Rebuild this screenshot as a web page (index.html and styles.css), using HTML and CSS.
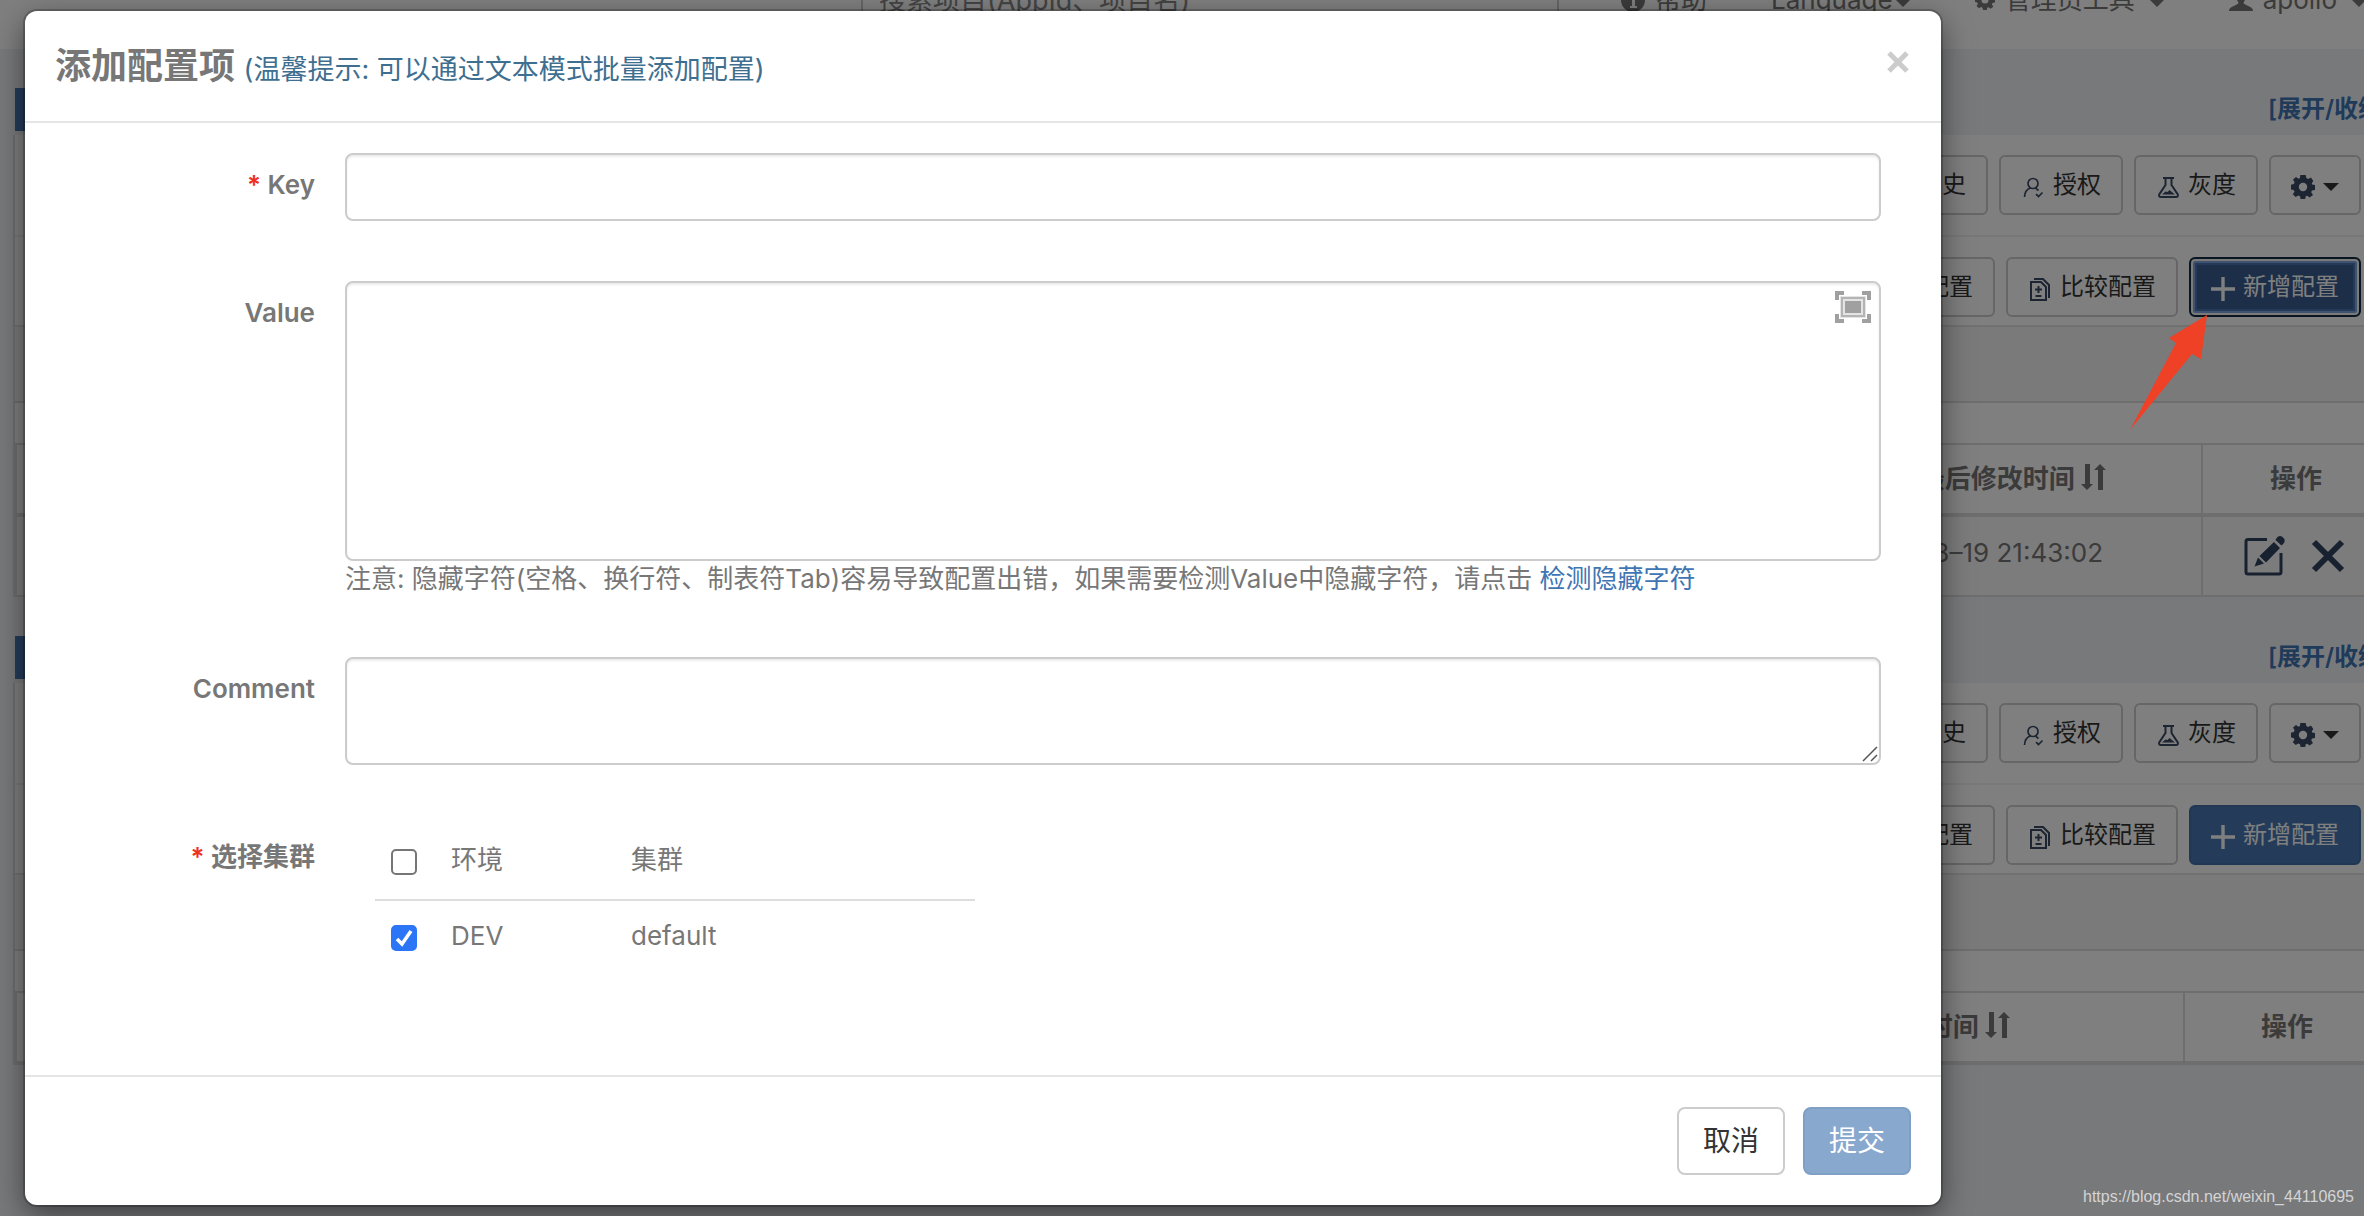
FILE: index.html
```html
<!DOCTYPE html>
<html lang="zh-CN">
<head>
<meta charset="utf-8">
<title>添加配置项</title>
<link rel="stylesheet" href="styles.css">
</head>
<body>
<svg class="sprite" aria-hidden="true">
  <symbol id="i-gear" viewBox="0 0 24 24"><path fill="currentColor" fill-rule="evenodd" d="M9.3 0h5.4l.6 3 1.9.9L20 2.4 22.300 6l-1.500 2.200.3 1.300L24 10v5l-3 .6-.8 1.600L22 20l-3.300 2.500-2.500-1.800-1.500.6L14.200 24H9.600L9 21.200l-1.700-.7L4.700 22 1.800 19.200l1.700-2.500-.8-1.600L0 14.500V9.700L2.800 9l.8-1.800L2 4.600 5 1.900l2.400 1.800L9 3zM12 7.800a4.200 4.200 0 1 0 0 8.400 4.200 4.200 0 0 0 0-8.400z"/></symbol>
  <symbol id="i-caret" viewBox="0 0 16 8"><path fill="currentColor" d="M0 0h16L8 8z"/></symbol>
  <symbol id="i-user" viewBox="0 0 26 26"><path fill="currentColor" d="M13 1c4 0 6 3 6 6.500S17 14 16 15v2l7 3.500c2 1 3 2.500 3 4.500H0c0-2 1-3.500 3-4.500L10 17v-2C9 14 7 11 7 7.500S9 1 13 1z"/></symbol>
  <symbol id="i-info" viewBox="0 0 24 24"><circle cx="12" cy="12" r="12" fill="currentColor"/><path fill="#fff" d="M9 10h5v8h2v2H9v-2h2v-6H9zM10 4h4v4h-4z"/></symbol>
  <symbol id="i-auth" viewBox="0 0 24 24"><g fill="none" stroke="currentColor" stroke-width="1.700"><circle cx="12" cy="8.500" r="5"/><path d="M3.500 22c.3-5 2.500-8 6-9M14.500 13.200l3 2.300M15 19.200l2.500 2.300 4-4"/></g></symbol>
  <symbol id="i-flask" viewBox="0 0 24 24"><path fill="none" stroke="currentColor" stroke-width="2" d="M7 3h11M9.500 3v7L3.200 19.500Q2.500 22 5 22h15q2.500 0 1.800-2.500L15.500 10V3"/><path fill="currentColor" d="M6 19.500l3.500-3 2 .5 2-2 5.500 4.500z"/></symbol>
  <symbol id="i-doc" viewBox="0 0 24 24"><g fill="none" stroke="currentColor" stroke-width="2"><path d="M3 5h10l5 5v13H3z"/><path d="M6 2h9l6 6v13M7 12.500h7M10.500 9v7M7.500 19h6"/></g></symbol>
  <symbol id="i-plus" viewBox="0 0 24 24"><path fill="currentColor" d="M10.300 0h3.400v10.300H24v3.400H13.700V24h-3.400V13.700H0v-3.400h10.300z"/></symbol>
  <symbol id="i-sort" viewBox="0 0 26 28"><path fill="currentColor" d="M4 1h5v20h3l-6 6-6-6h4zM17 27h5V7h3l-6-6-6 6h4z"/></symbol>
  <symbol id="i-edit" viewBox="0 0 42 42"><path fill="none" stroke="currentColor" stroke-width="3" d="M24 4.500H5q-2 0-2 2V37q0 2 2 2h31q2 0 2-2V18"/><path fill="currentColor" d="M31 7l6 6-14 14.500-6.500-6.500zM15 22.500l6 6-9.500 3zM33 4q2-4 6-2.500 4 3 2 6.500l-2.500 2.500L32.500 5z"/></symbol>
  <symbol id="i-cross" viewBox="0 0 34 34"><path fill="none" stroke="currentColor" stroke-width="6" d="M3 3l28 28M31 3L3 31"/></symbol>
</svg>

<div class="page">
  <nav class="navbar">
    <input class="search" type="text" aria-label="搜索项目" placeholder="搜索项目(AppId、项目名)">
    <ul class="menu">
      <li><a href="#"><svg class="ic24"><use href="#i-info"/></svg>帮助</a></li>
      <li><a href="#">Language<svg class="caret"><use href="#i-caret"/></svg></a></li>
      <li><a href="#"><svg class="ic20"><use href="#i-gear"/></svg>管理员工具<svg class="caret wide"><use href="#i-caret"/></svg></a></li>
      <li><a href="#"><svg class="ic24"><use href="#i-user"/></svg>apollo<svg class="caret wide"><use href="#i-caret"/></svg></a></li>
    </ul>
  </nav>

  <section class="namespace">
    <header class="ns-head"><span class="ns-tag">私有</span><a href="#">[展开/收缩]</a></header>
    <div class="panel">
      <div class="toolbar">
        <button class="btn"><svg class="ic24"><use href="#i-doc"/></svg>更改历史</button>
        <button class="btn"><svg class="ic24"><use href="#i-auth"/></svg>授权</button>
        <button class="btn"><svg class="ic24"><use href="#i-flask"/></svg>灰度</button>
        <button class="btn" aria-label="设置"><svg class="ic24"><use href="#i-gear"/></svg><svg class="caret"><use href="#i-caret"/></svg></button>
      </div>
      <div class="toolbar second">
        <button class="btn"><svg class="ic24"><use href="#i-doc"/></svg>同步配置</button>
        <button class="btn"><svg class="ic24"><use href="#i-doc"/></svg>比较配置</button>
        <button class="btn primary focused"><svg class="ic24"><use href="#i-plus"/></svg>新增配置</button>
      </div>
      <div class="filter"></div>
      <table class="items">
        <thead><tr><th class="time">最后修改时间 <svg class="sort"><use href="#i-sort"/></svg></th><th class="ops">操作</th></tr></thead>
        <tbody><tr><td class="time">2020–08–19 21:43:02</td><td class="ops"><div class="actions"><svg class="ic42"><use href="#i-edit"/></svg><svg class="ic34"><use href="#i-cross"/></svg></div></td></tr></tbody>
      </table>
    </div>
  </section>

  <section class="namespace">
    <header class="ns-head"><span class="ns-tag">私有</span><a href="#">[展开/收缩]</a></header>
    <div class="panel">
      <div class="toolbar">
        <button class="btn"><svg class="ic24"><use href="#i-doc"/></svg>更改历史</button>
        <button class="btn"><svg class="ic24"><use href="#i-auth"/></svg>授权</button>
        <button class="btn"><svg class="ic24"><use href="#i-flask"/></svg>灰度</button>
        <button class="btn" aria-label="设置"><svg class="ic24"><use href="#i-gear"/></svg><svg class="caret"><use href="#i-caret"/></svg></button>
      </div>
      <div class="toolbar second">
        <button class="btn"><svg class="ic24"><use href="#i-doc"/></svg>同步配置</button>
        <button class="btn"><svg class="ic24"><use href="#i-doc"/></svg>比较配置</button>
        <button class="btn primary"><svg class="ic24"><use href="#i-plus"/></svg>新增配置</button>
      </div>
      <div class="filter"></div>
      <table class="items empty">
        <thead><tr><th class="time">最后修改时间 <svg class="sort"><use href="#i-sort"/></svg></th><th class="ops">操作</th></tr></thead>
      </table>
    </div>
  </section>
</div>

<div class="overlay">
  <form class="modal" role="dialog" aria-labelledby="dlg-title">
    <header class="modal-head">
      <h4 id="dlg-title">添加配置项 <small>(温馨提示: 可以通过文本模式批量添加配置)</small></h4>
      <button class="close" type="button" aria-label="关闭"><svg viewBox="0 0 22 22"><path fill="none" stroke="#ccc" stroke-width="5" d="M2 2l18 18M20 2L2 20"/></svg></button>
    </header>
    <div class="modal-body">
      <label class="name" for="key"><span class="req">*</span> Key</label>
      <input class="field" id="key" type="text">

      <label class="name" for="value">Value</label>
      <div class="box">
        <textarea class="field tall" id="value"></textarea>
        <svg class="expand" viewBox="0 0 36 32"><path fill="#a0a0a0" d="M0 0h9v4H4v5H0zM27 0h9v9h-4V4h-5zM0 23h4v5h5v4H0zM32 23h4v9h-9v-4h5z"/><path fill="#e4e4e4" d="M5 5h26v22H5z"/><path fill="none" stroke="#b4b4b4" stroke-width="2" d="M7 7h22v18H7z"/><path fill="#a0a0a0" d="M10 10h16v12H10z"/></svg>
        <p class="help">注意: 隐藏字符(空格、换行符、制表符Tab)容易导致配置出错，如果需要检测Value中隐藏字符，请点击 <a href="#">检测隐藏字符</a></p>
      </div>

      <label class="name" for="comment">Comment</label>
      <div class="box">
        <textarea class="field short" id="comment"></textarea>
        <svg class="grip" viewBox="0 0 16 16"><path fill="none" stroke="#555" stroke-width="1.500" d="M1 15L15 1M9 15l6-6"/></svg>
      </div>

      <div class="name"><span class="req">*</span> 选择集群</div>
      <table class="clusters">
        <thead><tr><td class="pick"><input type="checkbox" aria-label="全选"></td><td class="env">环境</td><td>集群</td></tr></thead>
        <tbody><tr><td class="pick"><input type="checkbox" id="dev" checked></td><td class="env"><label for="dev">DEV</label></td><td>default</td></tr></tbody>
      </table>
    </div>
    <footer class="modal-foot">
      <button class="big" type="button">取消</button>
      <button class="big submit" type="submit">提交</button>
    </footer>
  </form>
</div>
<svg class="arrow" viewBox="0 0 78 116" aria-hidden="true"><path fill="#ee4126" d="M77 0L71 44 62 39 0 115 46 28 39 23z"/></svg>
<div class="watermark">https://blog.csdn.net/weixin_44110695</div>
</body>
</html>
```

FILE: styles.css
```css
* { box-sizing: border-box; }

body {
  margin: 0;
  height: 100vh;
  position: relative;
  overflow: hidden;
  background: #f1f2f7;
  color: #777;
  font: 26px/36px Inter, "Noto Sans CJK SC", sans-serif;
}

a { color: #4075b4; text-decoration: none; }
svg { display: block; flex: none; }
button, input, textarea { font: inherit; }
.sprite { position: absolute; width: 0; height: 0; }

.ic20 { width: 20px; height: 20px; }
.ic24 { width: 24px; height: 24px; }
.ic34 { width: 34px; height: 34px; }
.ic42 { width: 42px; height: 42px; }
.caret { width: 16px; height: 8px; }

/* page behind the dialog; it runs on past the right edge */
.page { margin-right: -27px; }

.navbar {
  display: flex;
  align-items: center;
  justify-content: flex-end;
  gap: 62px;
  height: 98px;
  margin-top: -49px;
  padding-right: 24px;
  background: #fff;
}
.search {
  flex: 0 1 698px;
  height: 68px;
  padding: 0 16px;
  border: 2px solid #ccc;
  background: #fff;
  font-size: 27px;
}
.search::placeholder { color: #888; }
.menu {
  display: flex;
  gap: 64px;
  margin: 0;
  padding: 0;
  list-style: none;
}
.menu a {
  display: flex;
  align-items: center;
  gap: 10px;
  color: #777;
  white-space: nowrap;
}
.menu .caret { margin: 6px 0 0 -8px; }
.menu .caret.wide { margin-left: 4px; }

.namespace { padding-left: 13px; }
.ns-head {
  display: flex;
  justify-content: space-between;
  align-items: flex-end;
  height: 86px;
  padding: 0 0 4px 2px;
  font-size: 24px;
}
.ns-head a { padding-bottom: 4px; font-weight: 600; }
.ns-tag {
  height: 43px;
  padding: 3px 16px;
  background: #4879b4;
  color: #fff;
}

.panel {
  border: 2px solid #ddd;
  border-width: 0 2px;
  background: #fff;
}
.toolbar {
  display: flex;
  justify-content: flex-end;
  gap: 11px;
  padding: 20px 28px 20px 0;
  border-bottom: 2px solid #f0f0f0;
}
.toolbar.second {
  padding-bottom: 8px;
  border-bottom-color: #e2e2e2;
}
.btn {
  display: flex;
  align-items: center;
  gap: 8px;
  height: 60px;
  padding: 0 20px;
  border: 2px solid #ccc;
  border-radius: 6px;
  background: #fff;
  color: #333;
  font-size: 24px;
  white-space: nowrap;
}
.btn svg { margin-top: 4px; color: #3a4a66; }
.btn .caret { color: #333; }
.btn.primary {
  border-color: #4171a8;
  background: #4879b4;
  color: #fff;
}
.btn.primary .ic24 { color: #fff; }
.btn.focused {
  border-color: #122b40;
  background: #385c90;
  box-shadow: inset 0 0 0 2px #f4f4f4, inset 0 0 0 4px #7ea6e0, inset 0 0 0 6px #4a74b0;
}
.filter {
  height: 76px;
  border-bottom: 2px solid #ddd;
  background: #f5f5f5;
}
.items {
  width: 100%;
  margin-top: 40px;
  border: 2px solid #ddd;
  border-right: 0;
  border-spacing: 0;
}
.items th, .items td { padding: 0; }
.items th { height: 70px; border-bottom: 2px solid #ddd; }
.items tbody td {
  height: 80px;
  border-top: 2px solid #ddd;
  background: #f9f9f9;
}
.items .time { padding-right: 94px; text-align: right; }
.items tbody .time { padding: 0 98px 6px 0; }
.items .ops { width: 188px; border-left: 2px solid #ddd; text-align: center; }
.items.empty .time { padding-right: 172px; }
.items.empty .ops { width: 206px; }
.sort {
  display: inline-block;
  width: 26px;
  height: 28px;
  vertical-align: -3px;
}
.actions {
  display: flex;
  align-items: center;
  justify-content: center;
  gap: 26px;
  padding-right: 4px;
  color: #30425e;
}

/* dialog */
.overlay {
  position: absolute;
  inset: 0;
  padding: 11px 423px 11px 25px;
  background: rgba(0, 0, 0, .5);
}
.modal {
  border-radius: 12px;
  background: #fff;
  box-shadow: 0 0 0 2px rgba(0, 0, 0, .2), 0 10px 30px rgba(0, 0, 0, .5);
}
.modal-head {
  display: flex;
  justify-content: space-between;
  align-items: center;
  height: 112px;
  padding: 4px 32px 0 30px;
  border-bottom: 2px solid #e5e5e5;
}
.modal-head h4 { margin: 0; font-size: 36px; font-weight: 700; }
.modal-head small { color: #3f6f90; font-size: 27px; font-weight: 400; }
.close {
  align-self: flex-start;
  margin-top: 36px;
  padding: 0;
  border: 0;
  background: none;
}
.close svg { width: 22px; height: 22px; }

.modal-body {
  display: grid;
  grid-template-columns: 260px 1fr;
  gap: 60px 30px;
  padding: 30px 60px 100px 30px;
}
.name { padding-top: 14px; font-weight: 600; text-align: right; }
.req { color: #f0301e; }
.field {
  display: block;
  width: 100%;
  height: 68px;
  padding: 12px 24px;
  border: 2px solid #ccc;
  border-radius: 8px;
  background: #fff;
  box-shadow: inset 0 2px 2px rgba(0, 0, 0, .075);
}
.field.tall { height: 280px; resize: none; }
.field.short { height: 108px; }
.field::-webkit-resizer { display: none; }
.box { position: relative; }
.expand {
  position: absolute;
  top: 10px;
  right: 10px;
  width: 36px;
  height: 32px;
}
.grip {
  position: absolute;
  right: 3px;
  bottom: 3px;
  width: 16px;
  height: 16px;
  pointer-events: none;
}
.help { margin: 0; }

.clusters {
  width: 600px;
  margin-left: 30px;
  border-spacing: 0;
  table-layout: fixed;
}
.clusters td { height: 74px; padding: 0 0 4px 16px; }
.clusters thead td { height: 76px; border-bottom: 2px solid #ddd; }
.clusters .pick { width: 60px; padding-bottom: 0; }
.clusters .env { width: 180px; }
.clusters input {
  display: block;
  width: 26px;
  height: 26px;
  margin: 0;
  border: 2px solid #767676;
  border-radius: 5px;
  background: #fff;
  appearance: none;
}
.clusters input:checked {
  border-color: #2b76f6;
  background: #2b76f6 url("data:image/svg+xml,%3Csvg xmlns='http://www.w3.org/2000/svg' viewBox='0 0 22 22'%3E%3Cpath fill='none' stroke='%23fff' stroke-width='3.500' d='M4 12l5 5L18 4'/%3E%3C/svg%3E") center / 22px no-repeat;
}

.modal-foot {
  display: flex;
  justify-content: flex-end;
  gap: 18px;
  padding: 30px;
  border-top: 2px solid #e5e5e5;
}
.big {
  height: 68px;
  padding: 0 24px;
  border: 2px solid #ccc;
  border-radius: 8px;
  background: #fff;
  color: #333;
  font-size: 28px;
}
.big.submit { border-color: #809fc5; background: #88a8ce; color: #fff; }

/* marks drawn over the finished page */
.arrow {
  position: absolute;
  top: 315px;
  right: 156px;
  width: 78px;
  height: 116px;
}
.watermark {
  position: absolute;
  right: 10px;
  bottom: 8px;
  color: #d4d4d4;
  font: 16px/22px "Liberation Sans", sans-serif;
}
```
